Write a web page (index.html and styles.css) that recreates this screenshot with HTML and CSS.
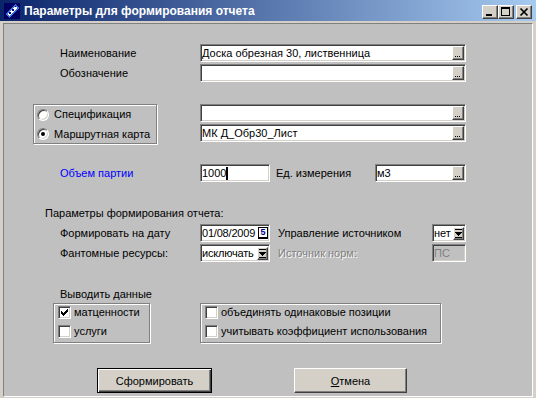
FILE: index.html
```html
<!DOCTYPE html>
<html>
<head>
<meta charset="utf-8">
<link rel="stylesheet" href="styles.css">
</head>
<body>
<div class="window">
  <div class="titlebar">
    <svg class="app-icon" width="16" height="16" viewBox="0 0 16 16" shape-rendering="crispEdges">
      <rect x="0" y="0" width="16" height="16" fill="#000060"/>
      <path d="M1 11 L11 1 L15 5 L5 15 Z" fill="#3a6ee0"/>
      <path d="M3 11 L11 3 L13 5 L5 13 Z" fill="#ffffff"/>
      <rect x="5" y="9" width="2" height="2" fill="#000080"/>
      <rect x="8" y="6" width="2" height="2" fill="#000080"/>
      <rect x="11" y="3" width="1" height="1" fill="#000080"/>
    </svg>
    <span class="title">Параметры для формирования отчета</span>
    <div class="tb-buttons">
      <span class="tb-btn"><svg width="14" height="12" viewBox="0 0 14 12" shape-rendering="crispEdges"><rect x="3" y="8" width="6" height="2" fill="#000"/></svg></span>
      <span class="tb-btn"><svg width="14" height="12" viewBox="0 0 14 12" shape-rendering="crispEdges"><path d="M2 1h9v9H2z M3 3v6h7V3z" fill="#000" fill-rule="evenodd"/></svg></span>
      <span class="tb-btn close"><svg width="14" height="12" viewBox="0 0 14 12"><path d="M3.5 2.5l7 7M10.5 2.5l-7 7" stroke="#000" stroke-width="1.7"/></svg></span>
    </div>
  </div>
  <div class="panel">
    <div class="row row-first">
      <span class="label">Наименование</span>
      <div class="field w-full"><span class="val">Доска обрезная 30, лиственница</span><span class="ell"><svg width="10" height="12" viewBox="0 0 10 12" shape-rendering="crispEdges"><rect x="2" y="9" width="1" height="1"/><rect x="4" y="9" width="1" height="1"/><rect x="6" y="9" width="1" height="1"/></svg></span></div>
    </div>
    <div class="row row-tight">
      <span class="label">Обозначение</span>
      <div class="field w-full"><span class="val"></span><span class="ell"><svg width="10" height="12" viewBox="0 0 10 12" shape-rendering="crispEdges"><rect x="2" y="9" width="1" height="1"/><rect x="4" y="9" width="1" height="1"/><rect x="6" y="9" width="1" height="1"/></svg></span></div>
    </div>

    <div class="source">
      <div class="groupbox radio-box">
        <div class="opt"><span class="radio"></span><span>Спецификация</span></div>
        <div class="opt"><span class="radio checked"></span><span>Маршрутная карта</span></div>
      </div>
      <div class="source-fields">
        <div class="field w-full"><span class="val"></span><span class="ell"><svg width="10" height="12" viewBox="0 0 10 12" shape-rendering="crispEdges"><rect x="2" y="9" width="1" height="1"/><rect x="4" y="9" width="1" height="1"/><rect x="6" y="9" width="1" height="1"/></svg></span></div>
        <div class="field w-full"><span class="val">МК Д_Обр30_Лист</span><span class="ell"><svg width="10" height="12" viewBox="0 0 10 12" shape-rendering="crispEdges"><rect x="2" y="9" width="1" height="1"/><rect x="4" y="9" width="1" height="1"/><rect x="6" y="9" width="1" height="1"/></svg></span></div>
      </div>
    </div>

    <div class="row row-volume">
      <span class="label blue">Объем партии</span>
      <div class="field w-70"><span class="val val-fixed">1000</span><span class="caret"></span></div>
      <span class="label2 unit-label">Ед. измерения</span>
      <div class="field w-91"><span class="val">м3</span><span class="ell"><svg width="10" height="12" viewBox="0 0 10 12" shape-rendering="crispEdges"><rect x="2" y="9" width="1" height="1"/><rect x="4" y="9" width="1" height="1"/><rect x="6" y="9" width="1" height="1"/></svg></span></div>
    </div>

    <div class="heading">Параметры формирования отчета:</div>

    <div class="row row-date">
      <span class="label">Формировать на дату</span>
      <div class="field w-70"><span class="val val-tight">01/08/2009</span><span class="datebtn">5</span></div>
      <span class="label2 ctl-label">Управление источником</span>
      <div class="field w-34"><span class="val">нет</span><span class="dropbtn"><svg width="9" height="11" viewBox="0 0 9 11" shape-rendering="crispEdges"><rect x="1" y="1" width="7" height="1"/><path d="M1 4h7v1H7v1H6v1H5v1H4V7H3V6H2V5H1z"/><rect x="1" y="9" width="7" height="1"/></svg></span></div>
    </div>
    <div class="row row-tight">
      <span class="label">Фантомные ресурсы:</span>
      <div class="field w-70"><span class="val val-tight">исключать</span><span class="dropbtn"><svg width="9" height="11" viewBox="0 0 9 11" shape-rendering="crispEdges"><rect x="1" y="1" width="7" height="1"/><path d="M1 4h7v1H7v1H6v1H5v1H4V7H3V6H2V5H1z"/><rect x="1" y="9" width="7" height="1"/></svg></span></div>
      <span class="label2 ctl-label disabled">Источник норм:</span>
      <div class="field w-34 field-disabled"><span class="val">ПС</span></div>
    </div>

    <div class="heading heading-out">Выводить данные</div>

    <div class="checks">
      <div class="groupbox check-box-left">
        <div class="opt"><span class="check"><svg width="7" height="7" viewBox="0 0 7 7" shape-rendering="crispEdges"><path d="M6 0h1v3H6v1H5v1H4v1H3v1H2V6H1V5H0V2h1v1h1v1h1V3h1V2h1V1h1z" fill="#000"/></svg></span><span>матценности</span></div>
        <div class="opt"><span class="check"></span><span>услуги</span></div>
      </div>
      <div class="groupbox check-box-right">
        <div class="opt"><span class="check"></span><span>объединять одинаковые позиции</span></div>
        <div class="opt"><span class="check"></span><span>учитывать коэффициент использования</span></div>
      </div>
    </div>

    <div class="actions">
      <button class="btn btn-default">Сформировать</button>
      <button class="btn btn-cancel"><u>О</u>тмена</button>
    </div>
  </div>
</div>
</body>
</html>
```
FILE: styles.css
```css
* { box-sizing: border-box; }
html, body { margin: 0; padding: 0; }
body {
  background: #d4d0c8;
  font-family: "Liberation Sans", Arial, sans-serif;
  font-size: 11px;
  color: #000;
}
.window {
  width: 536px;
  height: 398px;
  background: #d4d0c8;
  display: flex;
  flex-direction: column;
}
.titlebar {
  height: 21px;
  flex: none;
  background: linear-gradient(to right, #0a246a, #a6caf0);
  display: flex;
  align-items: center;
  padding: 0 4px 0 4px;
}
.app-icon { flex: none; }
.title {
  margin-left: 4px;
  color: #fff;
  font-weight: bold;
  font-size: 12px;
  flex: 1;
  white-space: nowrap;
}
.tb-buttons { display: flex; align-self: flex-start; margin-top: 5px; }
.tb-btn {
  width: 16px;
  height: 14px;
  background: #d4d0c8;
  border: 1px solid;
  border-color: #fff #404040 #404040 #fff;
  box-shadow: inset -1px -1px 0 #808080;
  display: flex;
}
.tb-btn svg { display: block; }
.tb-btn.close { margin-left: 2px; }

.panel {
  margin: 2px 3px 1px 3px;
  flex: 1;
  background: #c0c0c0;
  border: 1px solid;
  border-color: #808080 #fff #fff #808080;
  display: flex;
  flex-direction: column;
}

.row {
  display: flex;
  align-items: center;
  height: 18px;
  padding-left: 56px;
}
.row-first { margin-top: 20px; }
.row-tight { margin-top: 2px; }
.label { width: 140px; flex: none; white-space: nowrap; line-height: 13px; }
.label2 { flex: none; white-space: nowrap; line-height: 13px; }
.blue { color: #0000ff; }
.disabled { color: #808080; text-shadow: 1px 1px 0 #fff; }

.field {
  flex: none;
  height: 18px;
  background: #fff;
  border: 1px solid;
  border-color: #808080 #fff #fff #808080;
  box-shadow: inset 1px 1px 0 #404040, inset -1px -1px 0 #d4d0c8;
  padding: 1px;
  display: flex;
  align-items: center;
  line-height: 14px;
}
.field .val { flex: 1; white-space: nowrap; overflow: hidden; }
.field .val-fixed { flex: none; }
.field .val-tight { overflow: visible; letter-spacing: -0.2px; }
.w-full { width: 266px; }
.w-70 { width: 70px; }
.w-91 { width: 91px; }
.w-34 { width: 34px; }
.field-disabled { background: #c0c0c0; color: #808080; }

.ell, .dropbtn {
  flex: none;
  width: 12px;
  height: 14px;
  margin-left: auto;
  background: #d4d0c8;
  border: 1px solid;
  border-color: #fff #404040 #404040 #fff;
  box-shadow: inset -1px -1px 0 #808080;
  display: flex;
}
.ell svg, .dropbtn svg { display: block; }
.dropbtn { width: 11px; height: 13px; }
.datebtn {
  flex: none;
  width: 10px;
  height: 12px;
  margin-left: auto;
  border: 1px solid #000;
  border-bottom-width: 2px;
  background: #fff;
  font-size: 9px;
  font-weight: bold;
  line-height: 9px;
  text-align: center;
  color: #000080;
}
.caret {
  flex: none;
  width: 2px;
  height: 13px;
  background: #000;
}
.row-volume { margin-top: 20px; }
.unit-label { width: 99px; margin-left: 6px; }
.ctl-label { width: 154px; margin-left: 8px; }

.source {
  display: flex;
  margin-top: 22px;
  padding-left: 29px;
}
.groupbox {
  border: 1px solid #808080;
  box-shadow: inset 1px 1px 0 #fff, 1px 1px 0 #fff;
  display: flex;
  flex-direction: column;
}
.radio-box {
  width: 124px;
  height: 40px;
  padding: 1px 0 0 3px;
  gap: 2px;
}
.opt {
  display: flex;
  align-items: center;
  height: 18px;
  white-space: nowrap;
  line-height: 13px;
}
.radio {
  flex: none;
  width: 12px;
  height: 12px;
  border-radius: 50%;
  background: #fff;
  border: 1px solid;
  border-color: #808080 #fff #fff #808080;
  box-shadow: inset 1px 1px 0 #404040, inset -1px -1px 0 #d4d0c8;
  margin-right: 5px;
  display: flex;
  align-items: center;
  justify-content: center;
}
.radio.checked::after {
  content: "";
  width: 4px;
  height: 4px;
  border-radius: 50%;
  background: #000;
}
.source-fields {
  margin-left: 43px;
  display: flex;
  flex-direction: column;
  gap: 2px;
}

.heading {
  padding-left: 41px;
  line-height: 13px;
  margin-top: 25px;
}
.row-date { margin-top: 4px; }
.heading-out { padding-left: 56px; margin-top: 26px; }

.checks {
  display: flex;
  margin-top: 2px;
  padding-left: 49px;
}
.check-box-left {
  width: 97px;
  height: 40px;
  padding: 0 0 0 4px;
  gap: 2px;
}
.check-box-right {
  width: 241px;
  height: 40px;
  margin-left: 50px;
  padding: 0 0 0 4px;
  gap: 2px;
}
.check-box-left .opt, .check-box-right .opt { height: 17px; }
.check {
  flex: none;
  width: 13px;
  height: 13px;
  background: #fff;
  border: 1px solid;
  border-color: #808080 #fff #fff #808080;
  box-shadow: inset 1px 1px 0 #404040, inset -1px -1px 0 #d4d0c8;
  margin-right: 3px;
  display: flex;
  align-items: center;
  justify-content: center;
}
.check svg { display: block; }

.actions {
  display: flex;
  margin-top: 25px;
  padding-left: 93px;
}
.btn {
  font-family: "Liberation Sans", Arial, sans-serif;
  font-size: 11px;
  color: #000;
  height: 25px;
  width: 115px;
  background: #d4d0c8;
  border: 1px solid;
  border-color: #fff #404040 #404040 #fff;
  box-shadow: inset -1px -1px 0 #808080;
  padding: 0;
  margin: 0;
}
.btn-default {
  border: 1px solid #000;
  box-shadow: inset 1px 1px 0 #fff, inset -1px -1px 0 #404040, inset -2px -2px 0 #808080;
}
.btn-cancel { margin-left: 82px; width: 113px; }
```
